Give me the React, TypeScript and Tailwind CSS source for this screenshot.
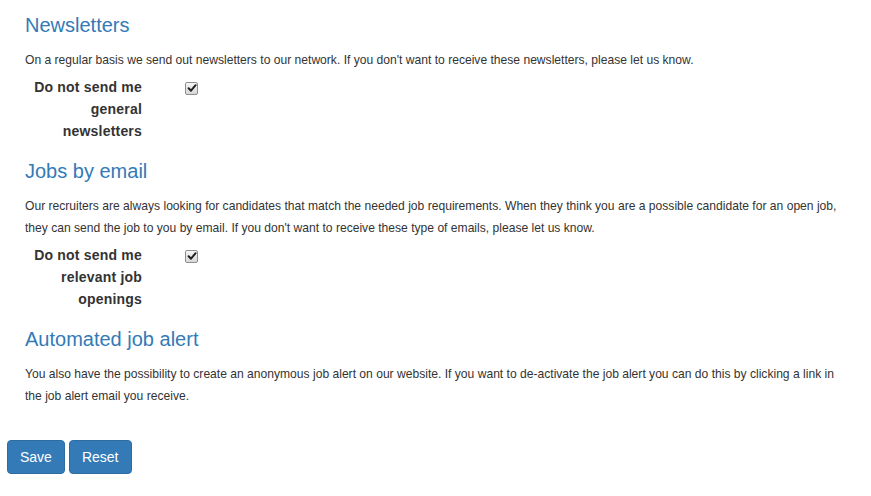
function CheckMark() {
  return (
    <span className="mt-[1px] inline-flex h-[13px] w-[13px] items-center justify-center rounded-[2px] border border-[#8f8f8f] bg-gradient-to-b from-[#f6f6f6] to-[#d8d8d8]">
      <svg viewBox="0 0 10 10" className="h-[10px] w-[10px]">
        <path d="M1.6 5.2 L4 7.7 L8.6 2.2" fill="none" stroke="#222" strokeWidth="2" strokeLinecap="round" strokeLinejoin="round" />
      </svg>
    </span>
  );
}

function OptOut({ label }: { label: string }) {
  return (
    <div className="mt-[5px] flex items-start">
      <label className="w-[117px] text-right text-[14px] font-bold leading-[22px] tracking-[0.2px] text-[#333]">{label}</label>
      <div className="ml-[43px]">
        <CheckMark />
      </div>
    </div>
  );
}

function Section({ title, children }: { title: string; children: React.ReactNode }) {
  return (
    <section>
      <h3 className="text-[20px] leading-[22px] text-[#337ab7]">{title}</h3>
      <p className="mt-[13px] text-[12.1px] leading-[22px] text-[#333]">{children}</p>
    </section>
  );
}

export default function App() {
  return (
    <div className="min-h-[496px] bg-white font-['Liberation_Sans',Arial,sans-serif]">
      <div className="pl-[25px] pr-[24px] pt-[14px]">
        <Section title="Newsletters">
          On a regular basis we send out newsletters to our network. If you don't want to receive these newsletters, please let us know.
        </Section>
        <OptOut label="Do not send me general newsletters" />

        <div className="mt-[18px]">
          <Section title="Jobs by email">
            Our recruiters are always looking for candidates that match the needed job requirements. When they think you are a possible candidate for an open job, they can send the job to you by email. If you don't want to receive these type of emails, please let us know.
          </Section>
        </div>
        <OptOut label="Do not send me relevant job openings" />

        <div className="mt-[18px]">
          <Section title="Automated job alert">
            You also have the possibility to create an anonymous job alert on our website. If you want to de-activate the job alert you can do this by clicking a link in the job alert email you receive.
          </Section>
        </div>
      </div>

      <div className="mt-[33px] flex gap-[4px] pl-[7px]">
        <button className="rounded-[4px] border border-[#2e6da4] bg-[#337ab7] px-[12px] py-[6px] text-[14px] leading-[20px] text-white">
          Save
        </button>
        <button className="rounded-[4px] border border-[#2e6da4] bg-[#337ab7] px-[12px] py-[6px] text-[14px] leading-[20px] text-white">
          Reset
        </button>
      </div>
    </div>
  );
}
